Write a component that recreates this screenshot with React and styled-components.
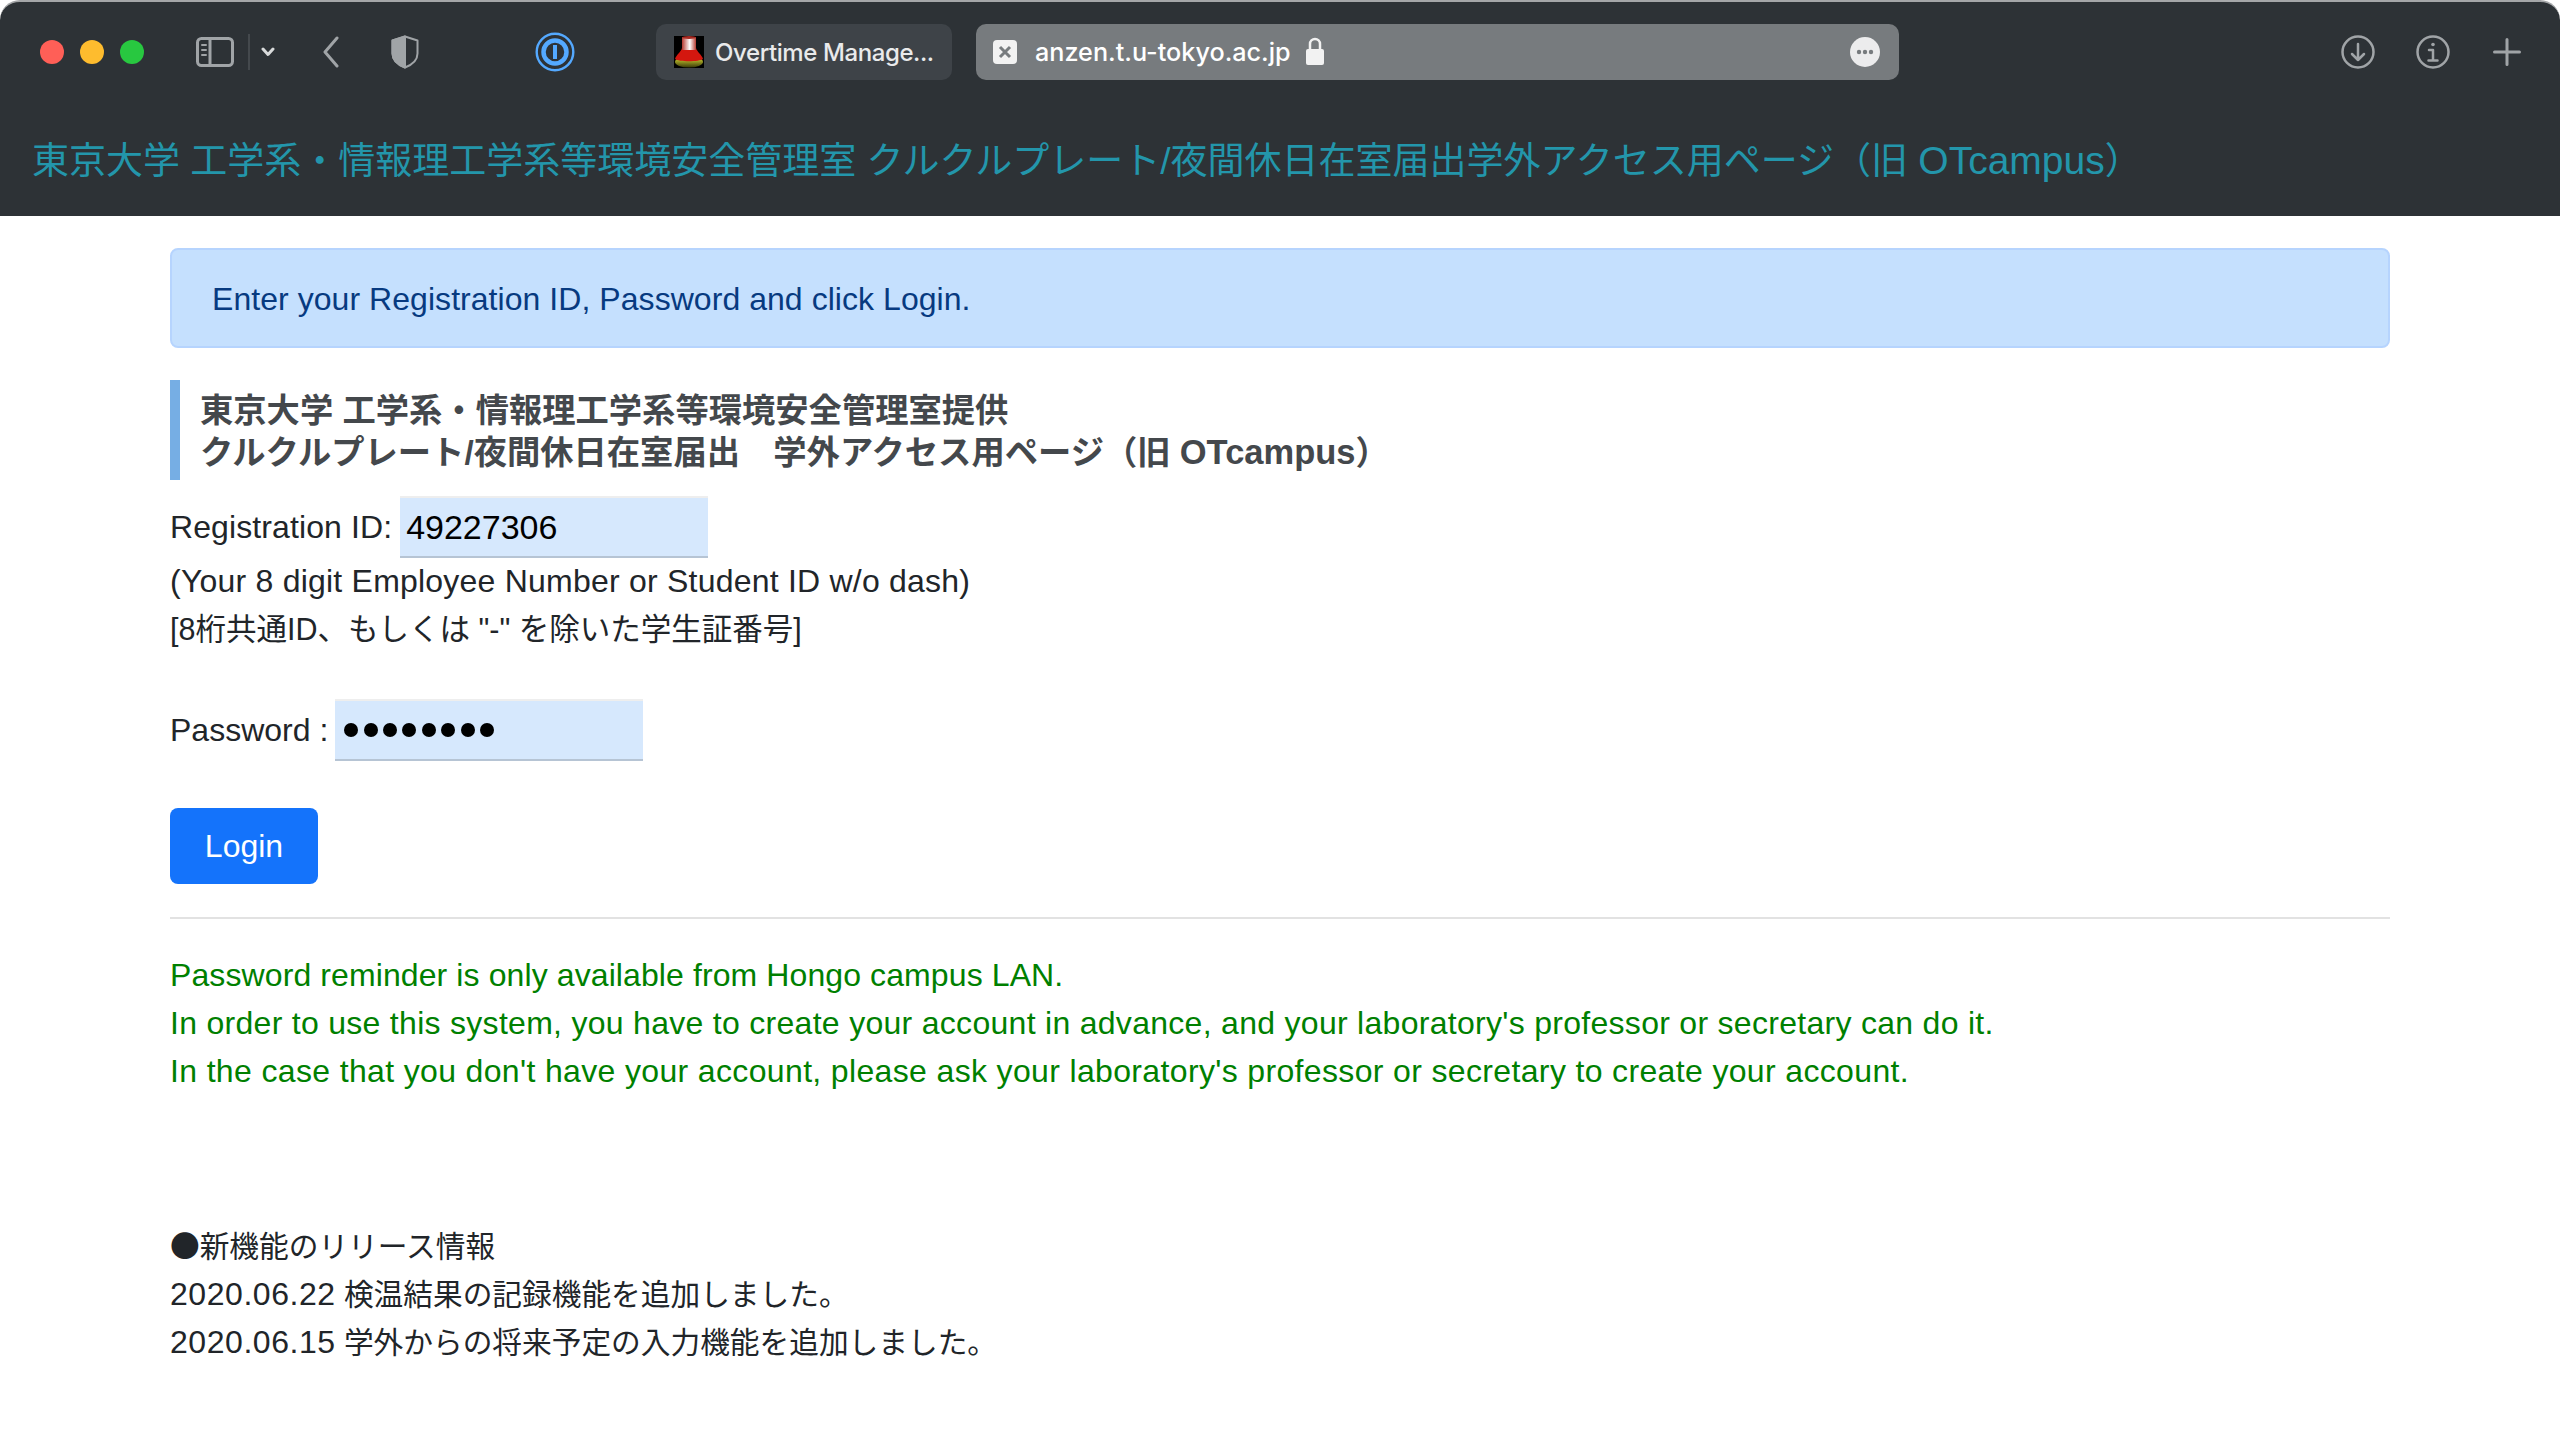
import React from 'react';
import styled, { createGlobalStyle } from 'styled-components';

const CJK = `"Liberation Sans", "Noto Sans CJK JP", sans-serif`;
const Global = createGlobalStyle`
  html, body { margin: 0; padding: 0; background: #fff; }
  body { font-family: ${CJK}; color: #212529; }
  * { box-sizing: border-box; }
`;

const Page = styled.div`width: 2560px; height: 1436px; background: #fff; overflow: hidden;`;
const Header = styled.header`
  height: 216px; background: #2d3236; border-radius: 20px 20px 0 0; border-top: 2px solid #a4a6a8;
  display: flex; flex-direction: column;
`;
const Toolbar = styled.div`display: flex; align-items: center; height: 78px; margin-top: 11px; padding: 0 0 0 40px;`;
const Light = styled.span`
  width: 24px; height: 24px; border-radius: 50%; background: ${p => p.$c}; margin-right: ${p => p.$mr || 16}px; flex: none;
`;
const Slot = styled.span`
  width: ${p => p.$w}px; margin-left: ${p => p.$ml || 0}px; display: flex; align-items: center; justify-content: center; flex: none;
`;
const Divider = styled.span`width: 2px; height: 36px; background: #44494d; margin-left: 14px; flex: none;`;
const Tab = styled.div`
  height: 56px; border-radius: 10px; background: #3e4348; width: 296px; margin-left: ${p => p.$ml}px;
  display: flex; align-items: center; padding-left: 18px; gap: 11px; flex: none;
  color: #e9eaeb; font: 500 24px "Inter", sans-serif; letter-spacing: -0.4px;
`;
const Address = styled.div`
  height: 56px; border-radius: 10px; background: #777b7e; width: 923px; margin-left: 24px; flex: none;
  display: flex; align-items: center; padding: 0 19px 0 17px; color: #fff; font: 500 25.2px "Inter", sans-serif;
`;
const Url = styled.span`margin-left: 18px;`;
const Title = styled.h1`
  margin: 41px 0 0 32px; font: 400 37px/60px ${CJK}; color: #2396ab; white-space: nowrap;
`;
const TitleLatin = styled.span`font-size: 39px; line-height: 1;`;
const Main = styled.main`padding: 32px 170px 0 170px; width: 2560px;`;
const Alert = styled.div`
  height: 100px; border: 2px solid #b6d4fe; background: #c5e0fe; border-radius: 8px;
  font-size: 32px; line-height: 98px; padding-left: 40px; color: #073a80; letter-spacing: 0.05px;
`;
const Heading = styled.h2`
  margin: 32px 0 0; border-left: 10px solid #76aee4; height: 100px; padding: 10px 0 0 20px;
  font: 700 33.3px/42px ${CJK}; color: #44484c;
`;
const HeadingLatin = styled.span`font-size: 34.5px; line-height: 1;`;
const Line = styled.div`
  display: flex; align-items: center; font-size: 32px; height: ${p => p.$h}px; margin-top: ${p => p.$mt || 0}px;
  white-space: pre; letter-spacing: ${p => p.$ls || 0}px;
`;
const Field = styled.div`
  width: 308px; height: 62px; margin-left: ${p => p.$ml || 8}px; background: #d6e8fd;
  border-top: 2px solid #eeeeee; border-bottom: 2px solid #b6c4d4; padding-left: ${p => p.$pl || 6}px;
  display: flex; align-items: center; color: #000; font-size: 34px; letter-spacing: 0;
`;
const Dot = styled.span`width: 14px; height: 14px; border-radius: 50%; background: #000; margin-right: 5.4px; flex: none;`;
const Jp = styled.div`font: 400 30.5px/48px ${CJK}; color: #212529;`;
const Button = styled.button`
  display: block; margin-top: 47px; width: 148px; height: 76px; border: none; border-radius: 8px;
  background: #1473fb; color: #fff; font: 400 32px ${CJK}; padding: 0;
`;
const Rule = styled.hr`margin: 33px 0 0; border: 0; border-top: 2px solid #e2e2e2;`;
const Notes = styled.div`margin-top: 32px; color: #008000; font-size: 32px; line-height: 48px;`;
const Note = styled.div`letter-spacing: ${p => p.$ls}px;`;
const Release = styled.div`margin-top: 126px; font: 400 29.7px/48px ${CJK}; color: #212529;`;
const ReleaseLine = styled.div`height: ${p => p.$h || 48}px;`;
const Num = styled.span`font-size: 32px; line-height: 1; letter-spacing: 0.55px;`;
const Bullet = styled.span`font-family: "Noto Sans CJK JP", sans-serif;`;

const Ic = ({ w, h, sw = 3, children }) => (
  <svg width={w} height={h} viewBox={`0 0 ${w} ${h}`} fill="none" stroke="#a0a4a7" strokeWidth={sw} strokeLinecap="round" strokeLinejoin="round">{children}</svg>
);

export default function App() {
  return (
    <Page>
      <Global />
      <Header>
        <Toolbar>
          <Light $c="#ff5f57" />
          <Light $c="#febc2e" />
          <Light $c="#28c840" $mr={52} />
          <Slot $w={38}>
            <Ic w={38} h={30}>
              <rect x="1.5" y="1.5" width="35" height="27" rx="4" />
              <path d="M14 2v26" />
              <path d="M6 8h4M6 13h4M6 18h4" strokeWidth="2" />
            </Ic>
          </Slot>
          <Divider />
          <Slot $w={18} $ml={9}><Ic w={14} h={10} sw={3}><path d="M2 2l5 5.5 5-5.5" stroke="#d8dadb" /></Ic></Slot>
          <Slot $w={18} $ml={45}><Ic w={18} h={32} sw={3}><path d="M15 2L3 16l12 14" /></Ic></Slot>
          <Slot $w={28} $ml={51}>
            <Ic w={28} h={34} sw={2}>
              <path d="M14 1.5l12.5 4v13c0 7-6 11.500-12.500 14C7.500 30 1.500 25.500 1.500 18.500v-13z" />
              <path d="M14 1.500v31C7.500 30 1.500 25.500 1.500 18.500v-13z" fill="#a0a4a7" />
            </Ic>
          </Slot>
          <Slot $w={40} $ml={116}>
            <svg width="40" height="40" viewBox="0 0 40 40" fill="none">
              <circle cx="20" cy="20" r="18.300" stroke="#54a9ff" strokeWidth="2.400" />
              <circle cx="20" cy="20" r="11.500" stroke="#54a9ff" strokeWidth="4.500" />
              <path d="M20 13v14" stroke="#54a9ff" strokeWidth="4" />
            </svg>
          </Slot>
          <Tab $ml={81}>
            <svg width="30" height="32" viewBox="0 0 30 32">
              <defs>
                <linearGradient id="tube" x1="0" x2="1" y1="0" y2="0">
                  <stop offset="0" stopColor="#b53a30" />
                  <stop offset="0.55" stopColor="#ffffff" />
                  <stop offset="1" stopColor="#b53a30" />
                </linearGradient>
                <linearGradient id="base" x1="0" x2="0" y1="0" y2="1">
                  <stop offset="0" stopColor="#e8e838" />
                  <stop offset="1" stopColor="#3a3a08" />
                </linearGradient>
              </defs>
              <rect width="30" height="32" fill="#000" />
              <ellipse cx="15" cy="26" rx="14" ry="5.500" fill="url(#base)" />
              <path d="M8 12h14c1 4 6 7 7 11-4 3-24 3-28 0 1-4 6-7 7-11z" fill="#d4170f" />
              <rect x="8" y="1" width="14" height="13" fill="url(#tube)" />
              <ellipse cx="15" cy="1.500" rx="7" ry="1.500" fill="#a82a22" />
            </svg>
            <span>Overtime Manage...</span>
          </Tab>
          <Address>
            <svg width="24" height="24" viewBox="0 0 24 24">
              <rect width="24" height="24" rx="4" fill="#f2f2f2" />
              <path d="M7 7l10 10M17 7L7 17" stroke="#777b7e" strokeWidth="3" />
            </svg>
            <Url>anzen.t.u-tokyo.ac.jp</Url>
            <svg width="20" height="30" viewBox="0 0 20 30" style={{ marginLeft: 14 }}>
              <path d="M5 13V7a5 5 0 0110 0v6" fill="none" stroke="#f2f2f2" strokeWidth="2.500" />
              <rect x="1" y="12" width="18" height="16" rx="2" fill="#f2f2f2" />
            </svg>
            <svg width="30" height="30" viewBox="0 0 30 30" style={{ marginLeft: 'auto' }}>
              <circle cx="15" cy="15" r="15" fill="#ececed" />
              <circle cx="9" cy="15" r="2.200" fill="#777b7e" /><circle cx="15" cy="15" r="2.200" fill="#777b7e" /><circle cx="21" cy="15" r="2.200" fill="#777b7e" />
            </svg>
          </Address>
          <Slot $w={34} $ml={442}>
            <Ic w={34} h={34} sw={2.500}><circle cx="17" cy="17" r="15.500" /><path d="M17 9v16M11 19l6 6 6-6" /></Ic>
          </Slot>
          <Slot $w={34} $ml={41}>
            <Ic w={34} h={34} sw={2.500}><circle cx="17" cy="17" r="15.500" /><path d="M17 15v10M12.500 25.500h9M13 15h4" /><circle cx="17" cy="9.500" r="1.800" fill="#a0a4a7" stroke="none" /></Ic>
          </Slot>
          <Slot $w={28} $ml={43}>
            <Ic w={28} h={28} sw={3}><path d="M14 1.500v25M1.500 14h25" /></Ic>
          </Slot>
        </Toolbar>
        <Title>東京大学 工学系・情報理工学系等環境安全管理室 クルクルプレート/夜間休日在室届出学外アクセス用ページ（旧 <TitleLatin>OTcampus</TitleLatin>）</Title>
      </Header>
      <Main>
        <Alert>Enter your Registration ID, Password and click Login.</Alert>
        <Heading>
          東京大学 工学系・情報理工学系等環境安全管理室提供<br />
          クルクルプレート/夜間休日在室届出　学外アクセス用ページ（旧 <HeadingLatin>OTcampus</HeadingLatin>）
        </Heading>
        <Line $h={62} $mt={16} $ls={0.1}>Registration ID:<Field>49227306</Field></Line>
        <Line $h={48} $mt={-1} $ls={0.22}>(Your 8 digit Employee Number or Student ID w/o dash)</Line>
        <Jp>[8桁共通ID、もしくは "-" を除いた学生証番号]</Jp>
        <Line $h={62} $mt={46}>Password :<Field $ml={7} $pl={9}>{Array.from({ length: 8 }, (_, i) => <Dot key={i} />)}</Field></Line>
        <Button>Login</Button>
        <Rule />
        <Notes>
          <Note $ls={0.1}>Password reminder is only available from Hongo campus LAN.</Note>
          <Note $ls={0.29}>In order to use this system, you have to create your account in advance, and your laboratory's professor or secretary can do it.</Note>
          <Note $ls={0.35}>In the case that you don't have your account, please ask your laboratory's professor or secretary to create your account.</Note>
        </Notes>
        <Release>
          <ReleaseLine $h={50}><Bullet>●</Bullet>新機能のリリース情報</ReleaseLine>
          <ReleaseLine><Num>2020.06.22</Num> 検温結果の記録機能を追加しました。</ReleaseLine>
          <ReleaseLine><Num>2020.06.15</Num> 学外からの将来予定の入力機能を追加しました。</ReleaseLine>
        </Release>
      </Main>
    </Page>
  );
}
